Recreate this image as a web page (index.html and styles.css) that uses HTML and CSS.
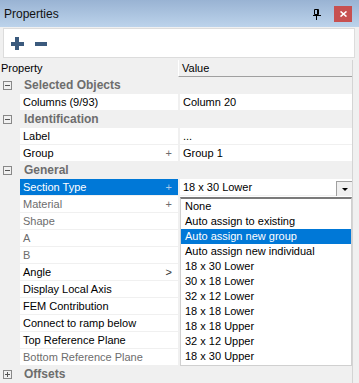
FILE: index.html
```html
<!DOCTYPE html>
<html lang="en">
<head>
    <meta charset="UTF-8">
    <title>Properties</title>
    <link rel="stylesheet" href="styles.css">
</head>
<body>
    <div class="panel">
        <div class="titlebar">
            <span class="title">Properties</span>
            <svg class="pin" width="8" height="11" viewBox="0 0 8 11">
                <path d="M1.5 0.5h4v5h-4z M4.5 0.5v5" fill="none" stroke="#000" stroke-width="1"/>
                <path d="M0 6.5h8 M3.5 6.5v4.5" fill="none" stroke="#000" stroke-width="1"/>
            </svg>
            <div class="close">
                <svg width="7" height="6" viewBox="0 0 7 6">
                    <path d="M0.5 0.5l6 5 M6.5 0.5l-6 5" stroke="#fff" stroke-width="1.6"/>
                </svg>
            </div>
        </div>

        <div class="toolbar">
            <span class="tool plus"></span>
            <span class="tool minus"></span>
        </div>

        <div class="grid">
            <div class="row head">
                <div class="name">Property</div>
                <div class="val">Value</div>
            </div>

            <div class="row cat"><span class="glyph open"></span>Selected Objects</div>
            <div class="row">
                <div class="gutter"></div>
                <div class="name">Columns (9/93)</div>
                <div class="val">Column 20</div>
            </div>

            <div class="row cat"><span class="glyph open"></span>Identification</div>
            <div class="row">
                <div class="gutter"></div>
                <div class="name">Label</div>
                <div class="val">...</div>
            </div>
            <div class="row">
                <div class="gutter"></div>
                <div class="name">Group<span class="mark">+</span></div>
                <div class="val">Group 1</div>
            </div>

            <div class="row cat"><span class="glyph open"></span>General</div>
            <div class="row">
                <div class="gutter"></div>
                <div class="name selected">Section Type<span class="mark">+</span></div>
                <div class="val combo">
                    <span>18 x 30 Lower</span>
                    <span class="drop-btn"></span>
                </div>
            </div>
            <div class="row">
                <div class="gutter"></div>
                <div class="name dim">Material<span class="mark">+</span></div>
                <div class="val"></div>
            </div>
            <div class="row">
                <div class="gutter"></div>
                <div class="name dim">Shape</div>
                <div class="val"></div>
            </div>
            <div class="row">
                <div class="gutter"></div>
                <div class="name dim">A</div>
                <div class="val"></div>
            </div>
            <div class="row">
                <div class="gutter"></div>
                <div class="name dim">B</div>
                <div class="val"></div>
            </div>
            <div class="row">
                <div class="gutter"></div>
                <div class="name">Angle<span class="mark arrow">&gt;</span></div>
                <div class="val"></div>
            </div>
            <div class="row">
                <div class="gutter"></div>
                <div class="name">Display Local Axis</div>
                <div class="val"></div>
            </div>
            <div class="row">
                <div class="gutter"></div>
                <div class="name">FEM Contribution</div>
                <div class="val"></div>
            </div>
            <div class="row">
                <div class="gutter"></div>
                <div class="name">Connect to ramp below</div>
                <div class="val"></div>
            </div>
            <div class="row">
                <div class="gutter"></div>
                <div class="name">Top Reference Plane</div>
                <div class="val"></div>
            </div>
            <div class="row">
                <div class="gutter"></div>
                <div class="name dim">Bottom Reference Plane</div>
                <div class="val"></div>
            </div>

            <div class="row cat"><span class="glyph"></span>Offsets</div>

            <ul class="dropdown">
                <li>None</li>
                <li>Auto assign to existing</li>
                <li class="hl">Auto assign new group</li>
                <li>Auto assign new individual</li>
                <li>18 x 30 Lower</li>
                <li>30 x 18 Lower</li>
                <li>32 x 12 Lower</li>
                <li>18 x 18 Lower</li>
                <li>18 x 18 Upper</li>
                <li>32 x 12 Upper</li>
                <li>18 x 30 Upper</li>
            </ul>
        </div>
    </div>
</body>
</html>
```

FILE: styles.css
```css
body {
    margin: 0;
    font-family: "Liberation Sans", Arial, sans-serif;
    font-size: 11px;
    color: #000;
    background: #f0f0f0;
}
.panel {
    width: 359px;
    height: 383px;
    overflow: hidden;
    background: #f0f0f0;
}
.titlebar {
    height: 27px;
    display: flex;
    align-items: center;
    background: linear-gradient(#99b3d3, #bcd3eb);
    margin-bottom: 1px;
}
.title {
    flex: 1;
    padding-left: 4px;
    font-size: 12px;
    color: #111;
}
.pin {
    margin-right: 13px;
    margin-top: 1px;
}
.close {
    width: 18px;
    height: 16px;
    margin-right: 7px;
    background: #c75050;
    display: flex;
    align-items: center;
    justify-content: center;
}
.toolbar {
    height: 28px;
    margin: 0 4px 2px 3px;
    background: #fff;
    border: 1px solid #dcdcdc;
    display: flex;
    align-items: center;
    padding-left: 7px;
    gap: 11px;
}
.tool {
    position: relative;
    width: 13px;
    height: 13px;
}
.tool::before, .plus::after {
    content: "";
    position: absolute;
    background: #3b5a7d;
    left: 0;
    top: 5px;
    width: 13px;
    height: 4px;
}
.plus::after {
    left: 4px;
    top: 0;
    width: 4px;
    height: 13px;
}
.minus::before {
    width: 12px;
}
.grid {
    position: relative;
    width: 352px;
    border-right: 1px solid #d4d4d4;
}
.row {
    display: flex;
    height: 16px;
    line-height: 16px;
    border-bottom: 1px solid #f0f0f0;
    white-space: nowrap;
}
.gutter {
    width: 20px;
    background: #f0f0f0;
}
.name {
    position: relative;
    width: 155px;
    padding-left: 3px;
    margin-right: 2px;
    background: #fff;
}
.val {
    flex: 1;
    padding-left: 3px;
    background: #fff;
}
.head {
    height: 17px;
    line-height: 17px;
    border-bottom: none;
}
.head .name {
    width: 177px;
    padding-left: 1px;
    margin-right: 0;
    background: #f0f0f0;
}
.head .val {
    background: #f0f0f0;
    border-left: 1px solid #fff;
    border-bottom: 1px solid #a0a0a0;
    padding-left: 3px;
}
.cat {
    background: #f0f0f0;
    font-weight: bold;
    color: #6d6d6d;
    align-items: center;
    font-size: 12px;
}
.glyph {
    position: relative;
    width: 7px;
    height: 7px;
    border: 1px solid #888;
    margin: 0 12px 0 3px;
}
.glyph::before, .glyph::after {
    content: "";
    position: absolute;
    background: #555;
    left: 1px;
    top: 3px;
    width: 5px;
    height: 1px;
}
.glyph::after {
    left: 3px;
    top: 1px;
    width: 1px;
    height: 5px;
}
.glyph.open::after {
    display: none;
}
.dim {
    color: #6d6d6d;
}
.mark {
    position: absolute;
    right: 6px;
    top: 0;
    color: #6d6d6d;
}
.arrow {
    color: #333;
}
.selected {
    background: #0078d7;
    color: #fff;
}
.selected .mark {
    color: #a8c8ea;
}
.combo {
    display: flex;
    align-items: center;
    justify-content: space-between;
    padding-right: 0;
}
.drop-btn {
    position: relative;
    width: 15px;
    height: 14px;
    margin-top: 2px;
    background: #f0f0f0;
    border-left: 1px solid #a0a0a0;
    border-top: 1px solid #a0a0a0;
}
.drop-btn::after {
    content: "";
    position: absolute;
    left: 5px;
    top: 6px;
    border-left: 3px solid transparent;
    border-right: 3px solid transparent;
    border-top: 3px solid #000;
}
.dropdown {
    position: absolute;
    left: 180px;
    top: 137px;
    width: 170px;
    margin: 0;
    padding: 0 0 1px 0;
    list-style: none;
    background: #fff;
    border: 1px solid #d0d0d0;
    border-top: 2px solid #7a7a7a;
}
.dropdown li {
    height: 15px;
    line-height: 15px;
    padding-left: 4px;
}
.dropdown .hl {
    background: #0078d7;
    color: #fff;
}
```
